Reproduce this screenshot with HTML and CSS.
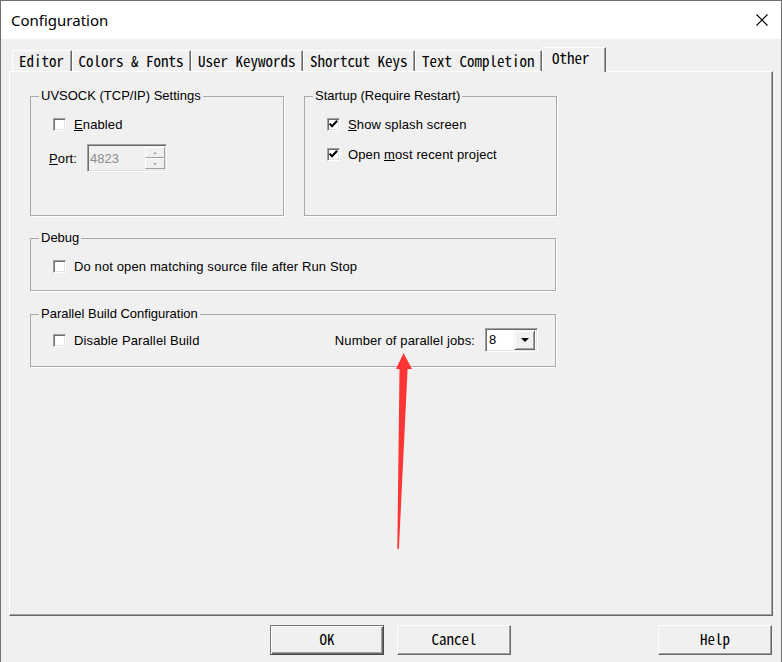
FILE: index.html
```html
<!DOCTYPE html>
<html>
<head>
<meta charset="utf-8">
<title>Configuration</title>
<link rel="stylesheet" href="styles.css">
</head>
<body>
<div class="window">
  <div class="titlebar">
    <span class="title">Configuration</span>
    <svg class="close" width="12" height="12" viewBox="0 0 12 12"><path d="M0.5 0.5 L11.5 11.5 M11.5 0.5 L0.5 11.5" stroke="#000" stroke-width="1.1" fill="none"/></svg>
  </div>
  <div class="client">
    <div class="tabs">
      <div class="tab">Editor</div>
      <div class="tab">Colors &amp; Fonts</div>
      <div class="tab">User Keywords</div>
      <div class="tab">Shortcut Keys</div>
      <div class="tab">Text Completion</div>
      <div class="tab active">Other</div>
    </div>
    <div class="panel">
      <div class="top-row">
        <fieldset class="group g-uvsock">
          <legend>UVSOCK (TCP/IP) Settings</legend>
          <div class="gb-body">
            <div class="check-row"><span class="cb"></span><span class="lbl"><u>E</u>nabled</span></div>
            <div class="port-row">
              <span class="lbl"><u>P</u>ort:</span>
              <div class="spin">
                <span class="spin-val">4823</span>
                <div class="spin-btns">
                  <span class="sb"><span class="tri-up"></span></span>
                  <span class="sb"><span class="tri-down"></span></span>
                </div>
              </div>
            </div>
          </div>
        </fieldset>
        <fieldset class="group g-startup">
          <legend>Startup (Require Restart)</legend>
          <div class="gb-body">
            <div class="check-row"><span class="cb"><svg width="11" height="11" viewBox="0 0 11 11"><path d="M1.6 4.6 L4 7.2 L9.2 1.8" stroke="#000" stroke-width="2.1" fill="none"/></svg></span><span class="lbl"><u>S</u>how splash screen</span></div>
            <div class="check-row second"><span class="cb"><svg width="11" height="11" viewBox="0 0 11 11"><path d="M1.6 4.6 L4 7.2 L9.2 1.8" stroke="#000" stroke-width="2.1" fill="none"/></svg></span><span class="lbl">Open <u>m</u>ost recent project</span></div>
          </div>
        </fieldset>
      </div>
      <fieldset class="group g-wide g-debug">
        <legend>Debug</legend>
        <div class="gb-body">
          <div class="check-row"><span class="cb"></span><span class="lbl">Do not open matching source file after Run Stop</span></div>
        </div>
      </fieldset>
      <fieldset class="group g-wide g-parallel">
        <legend>Parallel Build Configuration</legend>
        <div class="gb-body body-parallel">
          <div class="check-row"><span class="cb"></span><span class="lbl">Disable Parallel Build</span></div>
          <div class="jobs">
            <span class="lbl">Number of parallel jobs:</span>
            <div class="combo">
              <span class="combo-val">8</span>
              <span class="combo-btn"><span class="tri-black"></span></span>
            </div>
          </div>
        </div>
      </fieldset>
    </div>
    <div class="btnrow">
      <button class="btn default">OK</button>
      <button class="btn">Cancel</button>
      <button class="btn help">Help</button>
    </div>
  </div>
  <svg class="arrow" width="17" height="198" viewBox="0 0 17 198"><polygon points="7.5,1 16,17 11.6,17 2.9,197 1.3,197 3.5,17 0,17" fill="#fd3535"/></svg>
</div>
</body>
</html>
```

FILE: styles.css
```css
* { box-sizing: border-box; }
html, body { margin: 0; padding: 0; }
body {
  width: 782px;
  height: 662px;
  overflow: hidden;
  background: #f0f0f0;
  font-family: "Liberation Sans", Arial, sans-serif;
  font-size: 13px;
  color: #000;
}
.window {
  position: relative;
  width: 782px;
  height: 662px;
  border: 1px solid #6f6f6f;
  border-bottom: none;
  background: #f0f0f0;
  display: flex;
  flex-direction: column;
}
.titlebar {
  flex: none;
  height: 38px;
  background: #fff;
  display: flex;
  align-items: center;
  justify-content: space-between;
  padding: 0 13px 0 10px;
}
.title {
  font-family: "Noto Sans", "Open Sans", sans-serif;
  font-size: 15px;
  color: #000;
}
.close { display: block; }
.client { padding: 8px 8px 0 8px; }

.tabs {
  display: flex;
  align-items: flex-end;
  height: 24px;
  padding-left: 3px;
}
.tab {
  height: 21px;
  line-height: 19px;
  padding: 0 6.5px 0 6px;
  font-family: "Noto Sans Mono CJK SC", "Liberation Mono", monospace;
  font-size: 15px;
  white-space: nowrap;
  border-top: 1px solid #fff;
  border-left: 1px solid #fff;
  border-right: 1px solid #696969;
  box-shadow: inset -1px 0 #a0a0a0;
  color: #000;
}
.tab.active {
  position: relative;
  z-index: 1;
  height: 25px;
  margin-bottom: -1px;
  width: 64px;
  padding-left: 9px;
  background: #f0f0f0;
}

.panel {
  height: 545px;
  border: 1px solid;
  border-color: #fff #696969 #696969 #fff;
  box-shadow: inset -1px -1px #a0a0a0;
  padding: 17px 0 0 20px;
}
.top-row { display: flex; gap: 20px; }

.group {
  margin: 0;
  padding: 0;
  min-width: 0;
  border: 1px solid #a9a9a9;
  box-shadow: 1px 1px 0 #fff;
}
.group legend {
  margin-left: 8px;
  padding: 0 2px;
  line-height: 14px;
  font-size: 13px;
}
.g-uvsock { width: 254px; height: 127px; }
.g-startup { width: 253px; height: 127px; }
.g-wide { width: 526px; height: 60px; }
.g-debug { margin-top: 15px; }
.g-parallel { margin-top: 16px; }

.gb-body { padding: 13px 17px 0 22px; }
.body-parallel {
  padding-top: 7px;
  display: flex;
  align-items: center;
  justify-content: space-between;
  height: 31px;
}

.check-row {
  display: flex;
  align-items: center;
  gap: 8px;
  height: 16px;
}
.check-row.second { margin-top: 14px; }
.lbl { white-space: nowrap; letter-spacing: 0.12px; }

.cb {
  flex: none;
  width: 13px;
  height: 13px;
  background: #fff;
  border: 1px solid;
  border-color: #a0a0a0 #fff #fff #a0a0a0;
  box-shadow: inset 1px 1px #6d6d6d, inset -1px -1px #e3e3e3;
  display: flex;
  align-items: center;
  justify-content: center;
}
.cb svg { display: block; }

.port-row {
  display: flex;
  align-items: center;
  margin-top: 12px;
  margin-left: -4px;
  gap: 10px;
}
.spin {
  width: 80px;
  height: 28px;
  border: 1px solid;
  border-color: #a0a0a0 #fff #fff #a0a0a0;
  box-shadow: inset 1px 1px #6d6d6d, inset -1px -1px #e3e3e3;
  display: flex;
  align-items: center;
  justify-content: space-between;
  padding: 0 1px 0 2px;
}
.spin-val { color: #8d8d8d; font-size: 13px; }
.spin-btns { display: flex; flex-direction: column; width: 20px; }
.sb {
  height: 11px;
  border: 1px solid;
  border-color: #fff #a0a0a0 #a0a0a0 #fff;
  display: flex;
  align-items: center;
  justify-content: center;
  background: #f0f0f0;
}
.tri-up {
  width: 0; height: 0;
  border-left: 2px solid transparent;
  border-right: 2px solid transparent;
  border-bottom: 2px solid #a0a0a0;
}
.tri-down {
  width: 0; height: 0;
  border-left: 2px solid transparent;
  border-right: 2px solid transparent;
  border-top: 2px solid #a0a0a0;
}

.jobs { display: flex; align-items: center; gap: 10px; }
.combo {
  width: 53px;
  height: 24px;
  background: #fff;
  border: 1px solid;
  border-color: #a0a0a0 #fff #fff #a0a0a0;
  box-shadow: inset 1px 1px #6d6d6d, inset -1px -1px #e3e3e3;
  display: flex;
  align-items: center;
  justify-content: space-between;
  padding: 2px 2px 2px 3px;
}
.combo-val { font-size: 13px; line-height: 18px; align-self: flex-start; }
.combo-btn {
  width: 21px;
  height: 20px;
  background: #f0f0f0;
  border: 1px solid;
  border-color: #f0f0f0 #696969 #696969 #f0f0f0;
  box-shadow: inset 1px 1px #fff, inset -1px -1px #a0a0a0;
  display: flex;
  align-items: center;
  justify-content: center;
}
.tri-black {
  width: 0; height: 0;
  border-left: 4px solid transparent;
  border-right: 4px solid transparent;
  border-top: 4px solid #000;
}

.btnrow {
  display: flex;
  margin-top: 9px;
  padding: 0 1px 0 261px;
  gap: 13px;
}
.btn {
  width: 114px;
  height: 30px;
  margin: 0;
  padding: 0 0 4px 0;
  background: #f0f0f0;
  font-family: "Noto Sans Mono CJK SC", "Liberation Mono", monospace;
  font-size: 15px;
  color: #000;
  border: 1px solid;
  border-color: #fff #696969 #696969 #fff;
  box-shadow: inset -1px -1px #a0a0a0;
}
.btn.default {
  border-color: #7a7a7a #4a4a4a #4a4a4a #7a7a7a;
  box-shadow: inset 1px 1px #fff, inset -1px -1px #696969, inset -2px -2px #a0a0a0;
}
.btn.help { margin-left: auto; }

.arrow {
  position: absolute;
  left: 395px;
  top: 351px;
  pointer-events: none;
}
```
